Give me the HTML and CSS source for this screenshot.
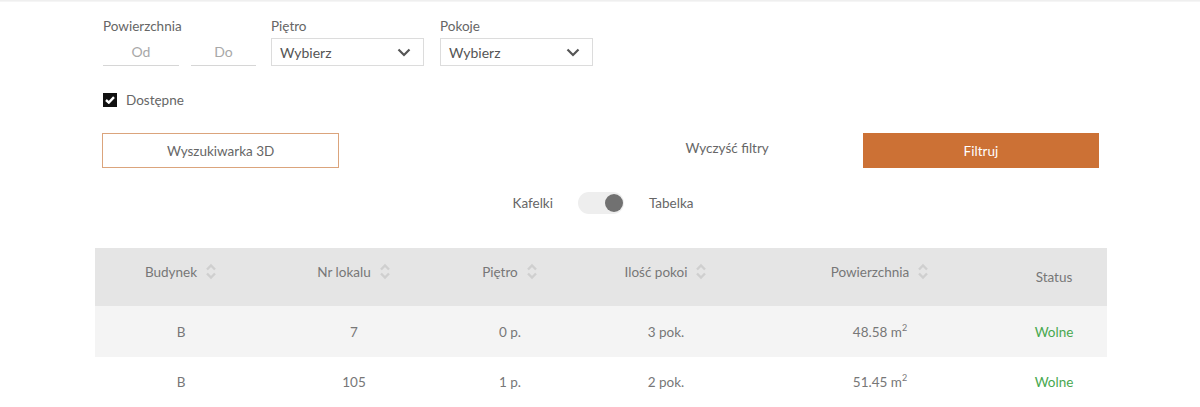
FILE: index.html
```html
<!DOCTYPE html>
<html lang="pl">
<head>
<meta charset="utf-8">
<link rel="stylesheet" href="styles.css">
</head>
<body>
<div class="topline"></div>
<div class="page">
  <form class="filters">
    <div class="fields">
      <div class="field">
        <div class="label">Powierzchnia</div>
        <div class="range">
          <div class="line-input od">Od</div>
          <div class="line-input do">Do</div>
        </div>
      </div>
      <div class="field">
        <div class="label">Piętro</div>
        <div class="select">Wybierz
          <svg class="chev" width="14" height="9" viewBox="0 0 14 9"><path d="M1.5 1.5 L7 7 L12.5 1.5" fill="none" stroke="#555" stroke-width="2.2"/></svg>
        </div>
      </div>
      <div class="field">
        <div class="label">Pokoje</div>
        <div class="select">Wybierz
          <svg class="chev" width="14" height="9" viewBox="0 0 14 9"><path d="M1.5 1.5 L7 7 L12.5 1.5" fill="none" stroke="#555" stroke-width="2.2"/></svg>
        </div>
      </div>
    </div>
    <label class="check">
      <span class="box"><svg width="10" height="8" viewBox="0 0 10 8"><path d="M1 4 L3.8 6.6 L9 1.2" fill="none" stroke="#fff" stroke-width="2.4"/></svg></span>
      Dostępne
    </label>
    <div class="buttons">
      <div class="btn outline">Wyszukiwarka 3D</div>
      <div></div>
      <div class="btn plain">Wyczyść filtry</div>
      <div class="btn solid">Filtruj</div>
    </div>
  </form>
  <div class="toggle-row">
    <span>Kafelki</span>
    <span class="track"><span class="knob"></span></span>
    <span>Tabelka</span>
  </div>
  <table class="list">
    <thead>
      <tr>
        <th class="c1"><span>Budynek</span><svg class="sort" width="12" height="17" viewBox="0 0 12 17"><path d="M2 6.5 L6 2.5 L10 6.5 M2 10.5 L6 14.5 L10 10.5" fill="none" stroke="#cfcfcf" stroke-width="2.4"/></svg></th>
        <th class="c2"><span>Nr lokalu</span><svg class="sort" width="12" height="17" viewBox="0 0 12 17"><path d="M2 6.5 L6 2.5 L10 6.5 M2 10.5 L6 14.5 L10 10.5" fill="none" stroke="#cfcfcf" stroke-width="2.4"/></svg></th>
        <th class="c3"><span>Piętro</span><svg class="sort" width="12" height="17" viewBox="0 0 12 17"><path d="M2 6.5 L6 2.5 L10 6.5 M2 10.5 L6 14.5 L10 10.5" fill="none" stroke="#cfcfcf" stroke-width="2.4"/></svg></th>
        <th class="c4"><span>Ilość pokoi</span><svg class="sort" width="12" height="17" viewBox="0 0 12 17"><path d="M2 6.5 L6 2.5 L10 6.5 M2 10.5 L6 14.5 L10 10.5" fill="none" stroke="#cfcfcf" stroke-width="2.4"/></svg></th>
        <th class="c5"><span>Powierzchnia</span><svg class="sort" width="12" height="17" viewBox="0 0 12 17"><path d="M2 6.5 L6 2.5 L10 6.5 M2 10.5 L6 14.5 L10 10.5" fill="none" stroke="#cfcfcf" stroke-width="2.4"/></svg></th>
        <th class="c6 status-h">Status</th>
      </tr>
    </thead>
    <tbody>
      <tr class="odd">
        <td>B</td><td>7</td><td>0 p.</td><td>3 pok.</td><td>48.58 m<sup>2</sup></td><td class="free">Wolne</td>
      </tr>
      <tr>
        <td>B</td><td>105</td><td>1 p.</td><td>2 pok.</td><td>51.45 m<sup>2</sup></td><td class="free">Wolne</td>
      </tr>
    </tbody>
  </table>
</div>
</body>
</html>
```

FILE: styles.css
```css
html, body {
  margin: 0;
  padding: 0;
  background: #fff;
  font-family: "Lato", "Open Sans", sans-serif;
  color: #666;
}

.topline {
  height: 2px;
  background: linear-gradient(#ececec, #f8f8f8);
}

.page {
  width: 1012px;
  margin-left: 95px;
}

.filters {
  padding: 0 8px;
}

.fields {
  display: flex;
  gap: 15px;
  padding-top: 15px;
}

.field:nth-child(3) {
  margin-left: 1px;
}

.label {
  font-size: 13.5px;
  line-height: 18px;
  color: #666;
  margin-bottom: 3px;
}

.range {
  display: flex;
  gap: 12px;
}

.line-input {
  height: 27px;
  border-bottom: 1px solid #d6d6d6;
  font-size: 14px;
  line-height: 28px;
  text-align: center;
  color: #a8a8a8;
}

.line-input.od { width: 76px; }
.line-input.do { width: 65px; }

.select {
  width: 143px;
  height: 26px;
  border: 1px solid #dcdcdc;
  padding-left: 8px;
  font-size: 14px;
  line-height: 27px;
  color: #555;
  display: flex;
  align-items: center;
  justify-content: space-between;
}

.chev {
  margin-right: 12px;
}

.check {
  display: flex;
  align-items: center;
  gap: 9px;
  margin-top: 27px;
  font-size: 13.5px;
  color: #666;
  height: 14px;
}

.box {
  width: 14px;
  height: 14px;
  background: #111;
  display: flex;
  align-items: center;
  justify-content: center;
}

.buttons {
  display: grid;
  grid-template-columns: repeat(4, 1fr);
  gap: 16px;
  margin-top: 26px;
  margin-left: -1px;
}

.btn {
  height: 35px;
  display: flex;
  align-items: center;
  justify-content: center;
  font-size: 13.5px;
  box-sizing: border-box;
}

.btn.outline {
  border: 1px solid #dba47c;
  color: #666;
}

.btn.plain {
  color: #666;
  padding-bottom: 5px;
}

.btn.solid {
  background: #cc7135;
  color: #fff;
  margin-left: 1px;
}

.toggle-row {
  display: flex;
  justify-content: center;
  align-items: center;
  gap: 25px;
  margin-top: 24px;
  margin-left: 4px;
  font-size: 13.5px;
  color: #666;
  height: 22px;
}

.track {
  width: 46px;
  height: 22px;
  border-radius: 11px;
  background: #eeeeee;
  display: flex;
  align-items: center;
  justify-content: flex-end;
  padding-right: 1px;
  box-sizing: border-box;
}

.knob {
  width: 18px;
  height: 18px;
  border-radius: 50%;
  background: #717171;
}

.list {
  margin-top: 34px;
  width: 1012px;
  border-collapse: collapse;
  table-layout: fixed;
  font-size: 13.5px;
}

.list th {
  background: #e5e5e5;
  height: 58px;
  font-weight: normal;
  color: #777;
  padding: 0 0 12px;
  text-align: center;
  vertical-align: middle;
  box-sizing: border-box;
}

.list th span {
  vertical-align: middle;
}

.list th .sort {
  vertical-align: middle;
  margin-left: 8px;
}

.list th.status-h {
  padding: 0 6px 0 0;
}

.c1 { width: 172px; }
.c2 { width: 174px; }
.c3 { width: 138px; }
.c4 { width: 174px; }
.c5 { width: 254px; }
.c6 { width: 100px; }

.list td {
  text-align: center;
  color: #777;
  height: 50px;
  padding: 0;
}

.list td sup {
  font-size: 9px;
  vertical-align: 6px;
  line-height: 0;
}

.list tr.odd td {
  background: #f4f4f4;
  height: 51px;
}

.list tbody tr:last-child td {
  border-bottom: 1px solid #ececec;
}

.list td.free {
  color: #48a84f;
  padding-right: 6px;
}
```
